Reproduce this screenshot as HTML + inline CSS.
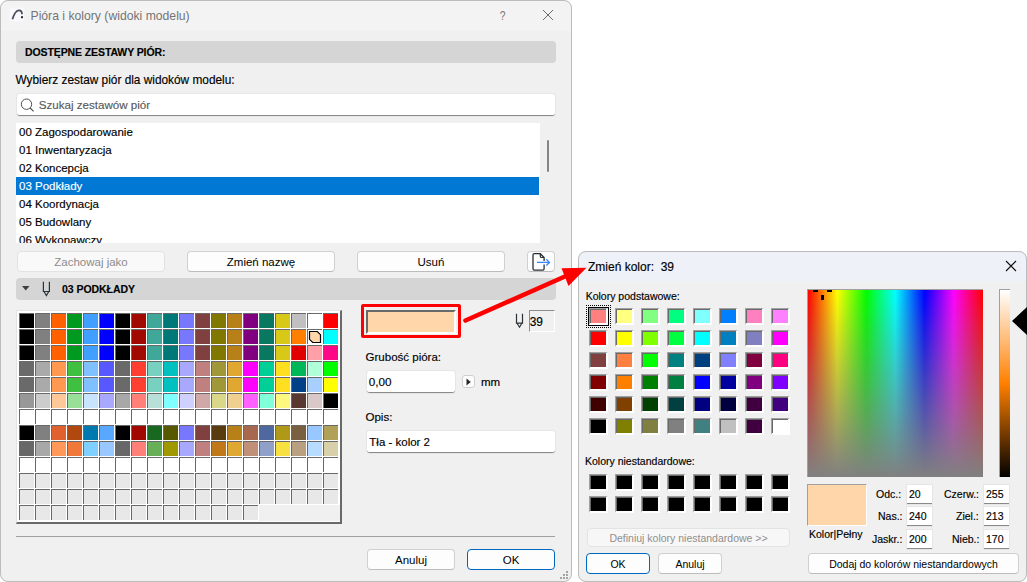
<!DOCTYPE html>
<html><head><meta charset="utf-8">
<style>
*{margin:0;padding:0;box-sizing:border-box}
html,body{width:1027px;height:582px;overflow:hidden;background:#fff;font-family:"Liberation Sans",sans-serif;color:#000}
.a{position:absolute}
.t{position:absolute;white-space:pre;line-height:1;-webkit-text-stroke:0.15px currentColor}
#lw{position:absolute;left:0;top:0;width:572px;height:582px;border-radius:8px;background:#f0f0f0;overflow:hidden}
.wb{position:absolute;border:1px solid #bcbcbc;border-radius:8px;pointer-events:none}
#lw .tb{position:absolute;left:0;top:0;width:572px;height:31px;background:#f3f3f3}
.hdr{position:absolute;background:#d5d5d5;border-radius:4px}
.btn{position:absolute;background:#fdfdfd;border:1px solid #d0d0d0;border-bottom-color:#bcbcbc;border-radius:4px;font-size:11.5px;text-align:center;line-height:1}
.btn span{position:relative;top:5px}
.inp{position:absolute;background:#fff;border-radius:3px;border-bottom:1px solid #8a8a8a;box-shadow:0 0 0 1px #e6e6e6}
#grid{position:absolute;left:16px;top:310px;width:326px;height:214px;background:#fff;border-top:1px solid #e3e3e3;border-left:1px solid #e3e3e3;border-right:2px solid #696969;border-bottom:2px solid #696969}
.pc{position:absolute;width:15px;height:15px;border-top:1px solid #696969;border-left:1px solid #696969}
#rw{position:absolute;left:578px;top:251px;width:449px;height:331px;border-radius:8px;background:#f0f0f0;overflow:hidden}
#rw .tb{position:absolute;left:0;top:0;width:449px;height:31px;background:#eef1f8}
.sw{position:absolute;width:19px;height:17px;border-top:1px solid #a0a0a0;border-left:1px solid #a0a0a0;border-right:2px solid #fff;border-bottom:2px solid #fff;box-shadow:inset 1px 1px 0 #696969}
.rb{position:absolute;background:#fdfdfd;border:1px solid #d0d0d0;border-bottom-color:#bcbcbc;border-radius:4px;font-size:10.5px;text-align:center}
.rb span{position:relative;top:3px}
.ri{position:absolute;background:#fff;border-bottom:1px solid #8a8a8a;box-shadow:0 0 0 1px #e6e6e6;font-size:10.5px}
</style></head><body>

<div id="lw">
  <div class="tb"></div>
  <!-- title icon -->
  <svg class="a" style="left:9px;top:7px" width="16" height="16" viewBox="0 0 16 16">
    <rect x="1" y="0.5" width="14" height="14" rx="3" fill="#f8f9fc"/>
    <path d="M3.4 12.3 C5 7 7.5 3.3 10 3.3 C12 3.3 13 4.8 13 7.3" fill="none" stroke="#4e4e58" stroke-width="1.8"/>
    <rect x="12" y="9.2" width="2" height="2" fill="#2a2a2a"/>
  </svg>
  <div class="t" style="left:30.5px;top:10px;font-size:12.2px;color:#737373;-webkit-text-stroke:0">Pióra i kolory (widoki modelu)</div>
  <div class="t" style="left:499px;top:8.5px;font-size:13px;color:#767676;transform:scaleX(0.8);-webkit-text-stroke:0">?</div>
  <svg class="a" style="left:542px;top:9px" width="12" height="12"><path d="M1 1L11 11M11 1L1 11" stroke="#6a6a6a" stroke-width="1"/></svg>

  <div class="hdr" style="left:16px;top:41px;width:540px;height:22px"></div>
  <div class="t" style="left:25px;top:47px;font-size:10.5px;font-weight:bold;letter-spacing:-0.1px">DOSTĘPNE ZESTAWY PIÓR:</div>

  <div class="t" style="left:15.5px;top:75px;font-size:11.85px">Wybierz zestaw piór dla widoków modelu:</div>

  <div class="inp" style="left:17px;top:94px;width:538px;height:22px"></div>
  <svg class="a" style="left:19px;top:97px" width="18" height="18"><circle cx="7.5" cy="7.2" r="5.2" fill="none" stroke="#505050" stroke-width="1"/><path d="M11.2 11L14.6 14.4" stroke="#505050" stroke-width="1.1"/></svg>
  <div class="t" style="left:38.7px;top:98.7px;font-size:11.6px;color:#5a5a5a">Szukaj zestawów piór</div>

  <div class="a" style="left:16px;top:123px;width:524px;height:120px;background:#fff;overflow:hidden">
    <div class="t" style="left:3px;top:4px;font-size:11.5px">00 Zagospodarowanie</div>
    <div class="t" style="left:3px;top:22px;font-size:11.5px">01 Inwentaryzacja</div>
    <div class="t" style="left:3px;top:40px;font-size:11.5px">02 Koncepcja</div>
    <div class="a" style="left:0;top:54px;width:523px;height:18px;background:#0078d4"></div>
    <div class="t" style="left:3px;top:58px;font-size:11.5px;color:#fff">03 Podkłady</div>
    <div class="t" style="left:3px;top:76px;font-size:11.5px">04 Koordynacja</div>
    <div class="t" style="left:3px;top:94px;font-size:11.5px">05 Budowlany</div>
    <div class="t" style="left:3px;top:112px;font-size:11.5px">06 Wykonawczy</div>
  </div>
  <div class="a" style="left:547px;top:140px;width:2px;height:32px;background:#858585;border-radius:1px"></div>

  <div class="btn" style="left:17px;top:251px;width:148px;height:21px;color:#8c8c8c;background:#f9f9f9;border-color:#e2e2e2"><span>Zachowaj jako</span></div>
  <div class="btn" style="left:187px;top:251px;width:148px;height:21px"><span>Zmień nazwę</span></div>
  <div class="btn" style="left:357px;top:251px;width:148px;height:21px"><span>Usuń</span></div>
  <div class="btn" style="left:527px;top:251px;width:28px;height:21px"></div>
  <svg class="a" style="left:530px;top:251px" width="24" height="21" viewBox="0 0 24 21">
    <path d="M14.1 13.6 V17.8 Q14.1 19.1 12.8 19.1 H4.3 Q3 19.1 3 17.8 V4 Q3 2.7 4.3 2.7 H10.3 L14.1 6.5 V10" fill="none" stroke="#2a2f35" stroke-width="1.3"/>
    <path d="M10.3 2.7 V5.2 Q10.3 6.5 11.6 6.5 H14.1" fill="none" stroke="#2a2f35" stroke-width="1.2"/>
    <path d="M7 11.4 H19.5 M16.3 8.3 L19.5 11.4 L16.3 14.5" fill="none" stroke="#3a86ff" stroke-width="1.3"/>
  </svg>

  <div class="hdr" style="left:16px;top:278px;width:540px;height:22px"></div>
  <svg class="a" style="left:21px;top:285px" width="10" height="7"><path d="M1 1H8.5L4.75 5.5Z" fill="#404040"/></svg>
  <svg class="a" style="left:40px;top:280px" width="12" height="18"><path d="M3.4 1.8V11.5H9.4V1.8M4 11.5L6.4 15.6L8.8 11.5" fill="none" stroke="#2b3238" stroke-width="1.2"/></svg>
  <div class="t" style="left:62px;top:284px;font-size:10.5px;font-weight:bold;letter-spacing:-0.05px">03 PODKŁADY</div>

  <div id="grid">
<div class="pc" style="left:2px;top:2px;background:#000000"></div>
<div class="pc" style="left:18px;top:2px;background:#808080"></div>
<div class="pc" style="left:34px;top:2px;background:#FF6000"></div>
<div class="pc" style="left:50px;top:2px;background:#009A20"></div>
<div class="pc" style="left:66px;top:2px;background:#40A0FF"></div>
<div class="pc" style="left:82px;top:2px;background:#0000FF"></div>
<div class="pc" style="left:98px;top:2px;background:#000000"></div>
<div class="pc" style="left:114px;top:2px;background:#A00A00"></div>
<div class="pc" style="left:130px;top:2px;background:#40A898"></div>
<div class="pc" style="left:146px;top:2px;background:#007878"></div>
<div class="pc" style="left:162px;top:2px;background:#7878FF"></div>
<div class="pc" style="left:178px;top:2px;background:#804040"></div>
<div class="pc" style="left:194px;top:2px;background:#807800"></div>
<div class="pc" style="left:210px;top:2px;background:#B88018"></div>
<div class="pc" style="left:226px;top:2px;background:#800080"></div>
<div class="pc" style="left:242px;top:2px;background:#087860"></div>
<div class="pc" style="left:258px;top:2px;background:#D8C818"></div>
<div class="pc" style="left:274px;top:2px;background:#C0C0C0"></div>
<div class="pc" style="left:290px;top:2px;background:#FFFFFF"></div>
<div class="pc" style="left:306px;top:2px;background:#FF0000"></div>
<div class="pc" style="left:2px;top:18px;background:#000000"></div>
<div class="pc" style="left:18px;top:18px;background:#808080"></div>
<div class="pc" style="left:34px;top:18px;background:#FF6000"></div>
<div class="pc" style="left:50px;top:18px;background:#009A20"></div>
<div class="pc" style="left:66px;top:18px;background:#40A0FF"></div>
<div class="pc" style="left:82px;top:18px;background:#0000FF"></div>
<div class="pc" style="left:98px;top:18px;background:#000000"></div>
<div class="pc" style="left:114px;top:18px;background:#A00A00"></div>
<div class="pc" style="left:130px;top:18px;background:#40A898"></div>
<div class="pc" style="left:146px;top:18px;background:#007878"></div>
<div class="pc" style="left:162px;top:18px;background:#7878FF"></div>
<div class="pc" style="left:178px;top:18px;background:#804040"></div>
<div class="pc" style="left:194px;top:18px;background:#807800"></div>
<div class="pc" style="left:210px;top:18px;background:#B88018"></div>
<div class="pc" style="left:226px;top:18px;background:#800080"></div>
<div class="pc" style="left:242px;top:18px;background:#087860"></div>
<div class="pc" style="left:258px;top:18px;background:#D8C818"></div>
<div class="pc" style="left:274px;top:18px;background:#FF8000"></div>
<div class="pc" style="left:290px;top:18px;background:#fff"></div>
<svg style="position:absolute;left:290px;top:18px" width="15" height="15"><polygon points="2.5,2.5 10.3,2.5 13.5,5.7 13.5,13.5 5.7,13.5 2.5,10.3" fill="#FFD5AA" stroke="#000" stroke-width="1.2"/></svg>
<div class="pc" style="left:306px;top:18px;background:#00FFFF"></div>
<div class="pc" style="left:2px;top:34px;background:#000000"></div>
<div class="pc" style="left:18px;top:34px;background:#808080"></div>
<div class="pc" style="left:34px;top:34px;background:#FF6000"></div>
<div class="pc" style="left:50px;top:34px;background:#009A20"></div>
<div class="pc" style="left:66px;top:34px;background:#40A0FF"></div>
<div class="pc" style="left:82px;top:34px;background:#0000FF"></div>
<div class="pc" style="left:98px;top:34px;background:#000000"></div>
<div class="pc" style="left:114px;top:34px;background:#A00A00"></div>
<div class="pc" style="left:130px;top:34px;background:#40A898"></div>
<div class="pc" style="left:146px;top:34px;background:#007878"></div>
<div class="pc" style="left:162px;top:34px;background:#7878FF"></div>
<div class="pc" style="left:178px;top:34px;background:#804040"></div>
<div class="pc" style="left:194px;top:34px;background:#807800"></div>
<div class="pc" style="left:210px;top:34px;background:#B88018"></div>
<div class="pc" style="left:226px;top:34px;background:#800080"></div>
<div class="pc" style="left:242px;top:34px;background:#087860"></div>
<div class="pc" style="left:258px;top:34px;background:#D8C818"></div>
<div class="pc" style="left:274px;top:34px;background:#E00000"></div>
<div class="pc" style="left:290px;top:34px;background:#FFA0A8"></div>
<div class="pc" style="left:306px;top:34px;background:#FF0888"></div>
<div class="pc" style="left:2px;top:50px;background:#6A6A6A"></div>
<div class="pc" style="left:18px;top:50px;background:#AAAAAA"></div>
<div class="pc" style="left:34px;top:50px;background:#FF9850"></div>
<div class="pc" style="left:50px;top:50px;background:#40C040"></div>
<div class="pc" style="left:66px;top:50px;background:#80C0FF"></div>
<div class="pc" style="left:82px;top:50px;background:#5858FF"></div>
<div class="pc" style="left:98px;top:50px;background:#6A6A6A"></div>
<div class="pc" style="left:114px;top:50px;background:#FF4030"></div>
<div class="pc" style="left:130px;top:50px;background:#78D0C0"></div>
<div class="pc" style="left:146px;top:50px;background:#00C0C0"></div>
<div class="pc" style="left:162px;top:50px;background:#A8A8FF"></div>
<div class="pc" style="left:178px;top:50px;background:#C08080"></div>
<div class="pc" style="left:194px;top:50px;background:#A09838"></div>
<div class="pc" style="left:210px;top:50px;background:#E0A830"></div>
<div class="pc" style="left:226px;top:50px;background:#FF00FF"></div>
<div class="pc" style="left:242px;top:50px;background:#00D098"></div>
<div class="pc" style="left:258px;top:50px;background:#FFE020"></div>
<div class="pc" style="left:274px;top:50px;background:#00B858"></div>
<div class="pc" style="left:290px;top:50px;background:#B0FFD8"></div>
<div class="pc" style="left:306px;top:50px;background:#00FF00"></div>
<div class="pc" style="left:2px;top:66px;background:#6A6A6A"></div>
<div class="pc" style="left:18px;top:66px;background:#AAAAAA"></div>
<div class="pc" style="left:34px;top:66px;background:#FF9850"></div>
<div class="pc" style="left:50px;top:66px;background:#40C040"></div>
<div class="pc" style="left:66px;top:66px;background:#80C0FF"></div>
<div class="pc" style="left:82px;top:66px;background:#5858FF"></div>
<div class="pc" style="left:98px;top:66px;background:#6A6A6A"></div>
<div class="pc" style="left:114px;top:66px;background:#FF4030"></div>
<div class="pc" style="left:130px;top:66px;background:#78D0C0"></div>
<div class="pc" style="left:146px;top:66px;background:#00C0C0"></div>
<div class="pc" style="left:162px;top:66px;background:#A8A8FF"></div>
<div class="pc" style="left:178px;top:66px;background:#C08080"></div>
<div class="pc" style="left:194px;top:66px;background:#A09838"></div>
<div class="pc" style="left:210px;top:66px;background:#E0A830"></div>
<div class="pc" style="left:226px;top:66px;background:#FF00FF"></div>
<div class="pc" style="left:242px;top:66px;background:#00D098"></div>
<div class="pc" style="left:258px;top:66px;background:#FFE020"></div>
<div class="pc" style="left:274px;top:66px;background:#004088"></div>
<div class="pc" style="left:290px;top:66px;background:#A8D0FF"></div>
<div class="pc" style="left:306px;top:66px;background:#FFFF00"></div>
<div class="pc" style="left:2px;top:82px;background:#989898"></div>
<div class="pc" style="left:18px;top:82px;background:#CCCCCC"></div>
<div class="pc" style="left:34px;top:82px;background:#FFC898"></div>
<div class="pc" style="left:50px;top:82px;background:#98E098"></div>
<div class="pc" style="left:66px;top:82px;background:#C8E4FF"></div>
<div class="pc" style="left:82px;top:82px;background:#A8A8FF"></div>
<div class="pc" style="left:98px;top:82px;background:#A8A8A8"></div>
<div class="pc" style="left:114px;top:82px;background:#FF8078"></div>
<div class="pc" style="left:130px;top:82px;background:#B8E0D8"></div>
<div class="pc" style="left:146px;top:82px;background:#80FFFF"></div>
<div class="pc" style="left:162px;top:82px;background:#D0D0FF"></div>
<div class="pc" style="left:178px;top:82px;background:#D0A8A8"></div>
<div class="pc" style="left:194px;top:82px;background:#D8D888"></div>
<div class="pc" style="left:210px;top:82px;background:#F0D090"></div>
<div class="pc" style="left:226px;top:82px;background:#FF60FF"></div>
<div class="pc" style="left:242px;top:82px;background:#80FFD8"></div>
<div class="pc" style="left:258px;top:82px;background:#FFF880"></div>
<div class="pc" style="left:274px;top:82px;background:#583830"></div>
<div class="pc" style="left:290px;top:82px;background:#D8C8C8"></div>
<div class="pc" style="left:306px;top:82px;background:#000000"></div>
<div class="pc" style="left:2px;top:98px;background:#FFFFFF"></div>
<div class="pc" style="left:18px;top:98px;background:#FFFFFF"></div>
<div class="pc" style="left:34px;top:98px;background:#FFFFFF"></div>
<div class="pc" style="left:50px;top:98px;background:#FFFFFF"></div>
<div class="pc" style="left:66px;top:98px;background:#FFFFFF"></div>
<div class="pc" style="left:82px;top:98px;background:#FFFFFF"></div>
<div class="pc" style="left:98px;top:98px;background:#FFFFFF"></div>
<div class="pc" style="left:114px;top:98px;background:#FFFFFF"></div>
<div class="pc" style="left:130px;top:98px;background:#FFFFFF"></div>
<div class="pc" style="left:146px;top:98px;background:#FFFFFF"></div>
<div class="pc" style="left:162px;top:98px;background:#FFFFFF"></div>
<div class="pc" style="left:178px;top:98px;background:#FFFFFF"></div>
<div class="pc" style="left:194px;top:98px;background:#FFFFFF"></div>
<div class="pc" style="left:210px;top:98px;background:#FFFFFF"></div>
<div class="pc" style="left:226px;top:98px;background:#FFFFFF"></div>
<div class="pc" style="left:242px;top:98px;background:#FFFFFF"></div>
<div class="pc" style="left:258px;top:98px;background:#FFFFFF"></div>
<div class="pc" style="left:274px;top:98px;background:#FFFFFF"></div>
<div class="pc" style="left:290px;top:98px;background:#FFFFFF"></div>
<div class="pc" style="left:306px;top:98px;background:#FFFFFF"></div>
<div class="pc" style="left:2px;top:114px;background:#000000"></div>
<div class="pc" style="left:18px;top:114px;background:#808080"></div>
<div class="pc" style="left:34px;top:114px;background:#E06030"></div>
<div class="pc" style="left:50px;top:114px;background:#B04810"></div>
<div class="pc" style="left:66px;top:114px;background:#0078B0"></div>
<div class="pc" style="left:82px;top:114px;background:#58A8FF"></div>
<div class="pc" style="left:98px;top:114px;background:#000000"></div>
<div class="pc" style="left:114px;top:114px;background:#A00800"></div>
<div class="pc" style="left:130px;top:114px;background:#186820"></div>
<div class="pc" style="left:146px;top:114px;background:#585800"></div>
<div class="pc" style="left:162px;top:114px;background:#7878FF"></div>
<div class="pc" style="left:178px;top:114px;background:#804040"></div>
<div class="pc" style="left:194px;top:114px;background:#583C10"></div>
<div class="pc" style="left:210px;top:114px;background:#B88018"></div>
<div class="pc" style="left:226px;top:114px;background:#A86850"></div>
<div class="pc" style="left:242px;top:114px;background:#5068A0"></div>
<div class="pc" style="left:258px;top:114px;background:#B09818"></div>
<div class="pc" style="left:274px;top:114px;background:#786040"></div>
<div class="pc" style="left:290px;top:114px;background:#98C8FF"></div>
<div class="pc" style="left:306px;top:114px;background:#B0A058"></div>
<div class="pc" style="left:2px;top:130px;background:#686868"></div>
<div class="pc" style="left:18px;top:130px;background:#A8A8A8"></div>
<div class="pc" style="left:34px;top:130px;background:#FF9858"></div>
<div class="pc" style="left:50px;top:130px;background:#F07838"></div>
<div class="pc" style="left:66px;top:130px;background:#80D0FF"></div>
<div class="pc" style="left:82px;top:130px;background:#98C8FF"></div>
<div class="pc" style="left:98px;top:130px;background:#686868"></div>
<div class="pc" style="left:114px;top:130px;background:#FF8078"></div>
<div class="pc" style="left:130px;top:130px;background:#68B058"></div>
<div class="pc" style="left:146px;top:130px;background:#A09800"></div>
<div class="pc" style="left:162px;top:130px;background:#A8A8FF"></div>
<div class="pc" style="left:178px;top:130px;background:#C08080"></div>
<div class="pc" style="left:194px;top:130px;background:#C07818"></div>
<div class="pc" style="left:210px;top:130px;background:#E0A830"></div>
<div class="pc" style="left:226px;top:130px;background:#C09078"></div>
<div class="pc" style="left:242px;top:130px;background:#90A0C8"></div>
<div class="pc" style="left:258px;top:130px;background:#F8E040"></div>
<div class="pc" style="left:274px;top:130px;background:#B8A080"></div>
<div class="pc" style="left:290px;top:130px;background:#B8DCFF"></div>
<div class="pc" style="left:306px;top:130px;background:#D8D0A8"></div>
<div class="pc" style="left:2px;top:146px;background:#FFFFFF"></div>
<div class="pc" style="left:18px;top:146px;background:#FFFFFF"></div>
<div class="pc" style="left:34px;top:146px;background:#FFFFFF"></div>
<div class="pc" style="left:50px;top:146px;background:#FFFFFF"></div>
<div class="pc" style="left:66px;top:146px;background:#FFFFFF"></div>
<div class="pc" style="left:82px;top:146px;background:#FFFFFF"></div>
<div class="pc" style="left:98px;top:146px;background:#FFFFFF"></div>
<div class="pc" style="left:114px;top:146px;background:#FFFFFF"></div>
<div class="pc" style="left:130px;top:146px;background:#FFFFFF"></div>
<div class="pc" style="left:146px;top:146px;background:#FFFFFF"></div>
<div class="pc" style="left:162px;top:146px;background:#FFFFFF"></div>
<div class="pc" style="left:178px;top:146px;background:#FFFFFF"></div>
<div class="pc" style="left:194px;top:146px;background:#FFFFFF"></div>
<div class="pc" style="left:210px;top:146px;background:#FFFFFF"></div>
<div class="pc" style="left:226px;top:146px;background:#FFFFFF"></div>
<div class="pc" style="left:242px;top:146px;background:#FFFFFF"></div>
<div class="pc" style="left:258px;top:146px;background:#FFFFFF"></div>
<div class="pc" style="left:274px;top:146px;background:#FFFFFF"></div>
<div class="pc" style="left:290px;top:146px;background:#FFFFFF"></div>
<div class="pc" style="left:306px;top:146px;background:#FFFFFF"></div>
<div class="pc" style="left:2px;top:162px;background:#E8E8E8"></div>
<div class="pc" style="left:18px;top:162px;background:#E8E8E8"></div>
<div class="pc" style="left:34px;top:162px;background:#E8E8E8"></div>
<div class="pc" style="left:50px;top:162px;background:#E8E8E8"></div>
<div class="pc" style="left:66px;top:162px;background:#E8E8E8"></div>
<div class="pc" style="left:82px;top:162px;background:#E8E8E8"></div>
<div class="pc" style="left:98px;top:162px;background:#E8E8E8"></div>
<div class="pc" style="left:114px;top:162px;background:#E8E8E8"></div>
<div class="pc" style="left:130px;top:162px;background:#E8E8E8"></div>
<div class="pc" style="left:146px;top:162px;background:#E8E8E8"></div>
<div class="pc" style="left:162px;top:162px;background:#E8E8E8"></div>
<div class="pc" style="left:178px;top:162px;background:#E8E8E8"></div>
<div class="pc" style="left:194px;top:162px;background:#E8E8E8"></div>
<div class="pc" style="left:210px;top:162px;background:#E8E8E8"></div>
<div class="pc" style="left:226px;top:162px;background:#E8E8E8"></div>
<div class="pc" style="left:242px;top:162px;background:#E8E8E8"></div>
<div class="pc" style="left:258px;top:162px;background:#E8E8E8"></div>
<div class="pc" style="left:274px;top:162px;background:#E8E8E8"></div>
<div class="pc" style="left:290px;top:162px;background:#E8E8E8"></div>
<div class="pc" style="left:306px;top:162px;background:#E8E8E8"></div>
<div class="pc" style="left:2px;top:178px;background:#E8E8E8"></div>
<div class="pc" style="left:18px;top:178px;background:#E8E8E8"></div>
<div class="pc" style="left:34px;top:178px;background:#E8E8E8"></div>
<div class="pc" style="left:50px;top:178px;background:#E8E8E8"></div>
<div class="pc" style="left:66px;top:178px;background:#E8E8E8"></div>
<div class="pc" style="left:82px;top:178px;background:#E8E8E8"></div>
<div class="pc" style="left:98px;top:178px;background:#E8E8E8"></div>
<div class="pc" style="left:114px;top:178px;background:#E8E8E8"></div>
<div class="pc" style="left:130px;top:178px;background:#E8E8E8"></div>
<div class="pc" style="left:146px;top:178px;background:#E8E8E8"></div>
<div class="pc" style="left:162px;top:178px;background:#E8E8E8"></div>
<div class="pc" style="left:178px;top:178px;background:#E8E8E8"></div>
<div class="pc" style="left:194px;top:178px;background:#E8E8E8"></div>
<div class="pc" style="left:210px;top:178px;background:#E8E8E8"></div>
<div class="pc" style="left:226px;top:178px;background:#E8E8E8"></div>
<div class="pc" style="left:242px;top:178px;background:#E8E8E8"></div>
<div class="pc" style="left:258px;top:178px;background:#E8E8E8"></div>
<div class="pc" style="left:274px;top:178px;background:#E8E8E8"></div>
<div class="pc" style="left:290px;top:178px;background:#E8E8E8"></div>
<div class="pc" style="left:306px;top:178px;background:#E8E8E8"></div>
<div class="pc" style="left:2px;top:194px;background:#E8E8E8"></div>
<div class="pc" style="left:18px;top:194px;background:#E8E8E8"></div>
<div class="pc" style="left:34px;top:194px;background:#E8E8E8"></div>
<div class="pc" style="left:50px;top:194px;background:#E8E8E8"></div>
<div class="pc" style="left:66px;top:194px;background:#E8E8E8"></div>
<div class="pc" style="left:82px;top:194px;background:#E8E8E8"></div>
<div class="pc" style="left:98px;top:194px;background:#E8E8E8"></div>
<div class="pc" style="left:114px;top:194px;background:#E8E8E8"></div>
<div class="pc" style="left:130px;top:194px;background:#E8E8E8"></div>
<div class="pc" style="left:146px;top:194px;background:#E8E8E8"></div>
<div class="pc" style="left:162px;top:194px;background:#E8E8E8"></div>
<div class="pc" style="left:178px;top:194px;background:#E8E8E8"></div>
<div class="pc" style="left:194px;top:194px;background:#E8E8E8"></div>
<div class="pc" style="left:210px;top:194px;background:#E8E8E8"></div>
<div class="pc" style="left:226px;top:194px;background:#E8E8E8"></div>
<div class="a" style="left:242px;top:194px;width:81px;height:16px;background:#f0f0f0"></div>
  </div>

  <!-- color swatch with red box -->
  <div class="a" style="left:366px;top:310px;width:90px;height:24px;border-top:2px solid #696969;border-left:2px solid #696969;border-right:2px solid #fff;border-bottom:2px solid #fff;background:#FFD5AA"></div>

  <svg class="a" style="left:514px;top:312px" width="12" height="18"><path d="M2.5 1.8V11.2H8.5V1.8M3.1 11.2L5.5 15.2L7.9 11.2" fill="none" stroke="#2b3238" stroke-width="1.2"/></svg>
  <div class="a" style="left:529px;top:310px;width:26px;height:22px;border-top:1px solid #8c8c8c;border-left:1px solid #8c8c8c;border-right:1px solid #fff;border-bottom:1px solid #fff"></div>
  <div class="t" style="left:529.7px;top:317px;font-size:11.9px">39</div>

  <div class="t" style="left:365.6px;top:352px;font-size:11.5px">Grubość pióra:</div>
  <div class="inp" style="left:367px;top:371px;width:88px;height:22px"></div>
  <div class="t" style="left:368.8px;top:376px;font-size:11.7px">0,00</div>
  <div class="a" style="left:462px;top:375px;width:13px;height:13px;background:#fdfdfd;border:1px solid #cfcfcf;border-radius:3px"></div>
  <svg class="a" style="left:466px;top:378px" width="6" height="8"><path d="M0.5 0.5L4.8 4L0.5 7.5Z" fill="#2a2a2a"/></svg>
  <div class="t" style="left:481px;top:376.5px;font-size:11.5px">mm</div>

  <div class="t" style="left:365.5px;top:412px;font-size:11.5px">Opis:</div>
  <div class="inp" style="left:367px;top:431px;width:188px;height:22px"></div>
  <div class="t" style="left:369.3px;top:437px;font-size:11.5px">Tła - kolor 2</div>

  <div class="a" style="left:16px;top:536px;width:539px;height:1px;background:#a0a0a0"></div>
  <div class="btn" style="left:367px;top:549px;width:88px;height:21px"><span>Anuluj</span></div>
  <svg class="a" style="left:558px;top:569px" width="12" height="12" fill="#a4a4a4"><rect x="8" y="2" width="2" height="2"/><rect x="5" y="5" width="2" height="2"/><rect x="8" y="5" width="2" height="2"/><rect x="2" y="8" width="2" height="2"/><rect x="5" y="8" width="2" height="2"/><rect x="8" y="8" width="2" height="2"/></svg>
  <div class="btn" style="left:467px;top:549px;width:88px;height:21px;border:1px solid #0067c0"><span>OK</span></div>
</div>

<div class="wb" style="left:0;top:0;width:572px;height:582px"></div>
<!-- red annotation box + arrow -->
<div class="a" style="left:361px;top:304px;width:100px;height:34px;border:3px solid #ff0000;border-radius:2px"></div>


<div id="rw">
  <div class="tb"></div>
  <div class="t" style="left:10px;top:10px;font-size:12px">Zmień kolor:  39</div>
  <svg class="a" style="left:427px;top:9px" width="13" height="13"><path d="M1 1L11 11M11 1L1 11" stroke="#111" stroke-width="1.1"/></svg>
  <div class="t" style="left:7.7px;top:40px;font-size:10.5px">Kolory podstawowe:</div>
  <div class="t" style="left:7px;top:205px;font-size:10.5px">Kolory niestandardowe:</div>
</div>
<div class="wb" style="left:578px;top:251px;width:449px;height:331px"></div>
<div id="rwc" class="a" style="left:0;top:0">
<div class="sw" style="left:589px;top:308px;background:#FF8080"></div>
<div class="sw" style="left:615px;top:308px;background:#FFFF80"></div>
<div class="sw" style="left:641px;top:308px;background:#80FF80"></div>
<div class="sw" style="left:667px;top:308px;background:#00FF80"></div>
<div class="sw" style="left:693px;top:308px;background:#80FFFF"></div>
<div class="sw" style="left:719px;top:308px;background:#0080FF"></div>
<div class="sw" style="left:745px;top:308px;background:#FF80C0"></div>
<div class="sw" style="left:771px;top:308px;background:#FF80FF"></div>
<div class="sw" style="left:589px;top:330px;background:#FF0000"></div>
<div class="sw" style="left:615px;top:330px;background:#FFFF00"></div>
<div class="sw" style="left:641px;top:330px;background:#80FF00"></div>
<div class="sw" style="left:667px;top:330px;background:#00FF40"></div>
<div class="sw" style="left:693px;top:330px;background:#00FFFF"></div>
<div class="sw" style="left:719px;top:330px;background:#0080C0"></div>
<div class="sw" style="left:745px;top:330px;background:#8080C0"></div>
<div class="sw" style="left:771px;top:330px;background:#FF00FF"></div>
<div class="sw" style="left:589px;top:352px;background:#804040"></div>
<div class="sw" style="left:615px;top:352px;background:#FF8040"></div>
<div class="sw" style="left:641px;top:352px;background:#00FF00"></div>
<div class="sw" style="left:667px;top:352px;background:#008080"></div>
<div class="sw" style="left:693px;top:352px;background:#004080"></div>
<div class="sw" style="left:719px;top:352px;background:#8080FF"></div>
<div class="sw" style="left:745px;top:352px;background:#800040"></div>
<div class="sw" style="left:771px;top:352px;background:#FF0080"></div>
<div class="sw" style="left:589px;top:374px;background:#800000"></div>
<div class="sw" style="left:615px;top:374px;background:#FF8000"></div>
<div class="sw" style="left:641px;top:374px;background:#008000"></div>
<div class="sw" style="left:667px;top:374px;background:#008040"></div>
<div class="sw" style="left:693px;top:374px;background:#0000FF"></div>
<div class="sw" style="left:719px;top:374px;background:#0000A0"></div>
<div class="sw" style="left:745px;top:374px;background:#800080"></div>
<div class="sw" style="left:771px;top:374px;background:#8000FF"></div>
<div class="sw" style="left:589px;top:396px;background:#400000"></div>
<div class="sw" style="left:615px;top:396px;background:#804000"></div>
<div class="sw" style="left:641px;top:396px;background:#004000"></div>
<div class="sw" style="left:667px;top:396px;background:#004040"></div>
<div class="sw" style="left:693px;top:396px;background:#000080"></div>
<div class="sw" style="left:719px;top:396px;background:#000040"></div>
<div class="sw" style="left:745px;top:396px;background:#400040"></div>
<div class="sw" style="left:771px;top:396px;background:#400080"></div>
<div class="sw" style="left:589px;top:418px;background:#000000"></div>
<div class="sw" style="left:615px;top:418px;background:#808000"></div>
<div class="sw" style="left:641px;top:418px;background:#808040"></div>
<div class="sw" style="left:667px;top:418px;background:#808080"></div>
<div class="sw" style="left:693px;top:418px;background:#408080"></div>
<div class="sw" style="left:719px;top:418px;background:#C0C0C0"></div>
<div class="sw" style="left:745px;top:418px;background:#400040"></div>
<div class="sw" style="left:771px;top:418px;background:#FFFFFF"></div>
<div class="sw" style="left:589px;top:474px;background:#000"></div>
<div class="sw" style="left:615px;top:474px;background:#000"></div>
<div class="sw" style="left:641px;top:474px;background:#000"></div>
<div class="sw" style="left:667px;top:474px;background:#000"></div>
<div class="sw" style="left:693px;top:474px;background:#000"></div>
<div class="sw" style="left:719px;top:474px;background:#000"></div>
<div class="sw" style="left:745px;top:474px;background:#000"></div>
<div class="sw" style="left:771px;top:474px;background:#000"></div>
<div class="sw" style="left:589px;top:496px;background:#000"></div>
<div class="sw" style="left:615px;top:496px;background:#000"></div>
<div class="sw" style="left:641px;top:496px;background:#000"></div>
<div class="sw" style="left:667px;top:496px;background:#000"></div>
<div class="sw" style="left:693px;top:496px;background:#000"></div>
<div class="sw" style="left:719px;top:496px;background:#000"></div>
<div class="sw" style="left:745px;top:496px;background:#000"></div>
<div class="sw" style="left:771px;top:496px;background:#000"></div>
  <!-- selection focus -->
  <div class="a" style="left:588px;top:307px;width:21px;height:19px;border:1px solid #000"></div>
  <div class="a" style="left:586px;top:305px;width:25px;height:23px;border:1px dotted #000"></div>

  <!-- spectrum -->
  <div class="a" style="left:807px;top:289px;width:176px;height:188px;border-top:1px solid #a0a0a0;border-left:1px solid #a0a0a0;background:linear-gradient(to bottom,rgba(128,128,128,0),rgba(128,128,128,1)),linear-gradient(to right,#f00 0%,#ff0 16.67%,#0f0 33.33%,#0ff 50%,#00f 66.67%,#f0f 83.33%,#f00 100%)"></div>
  <div class="a" style="left:813px;top:290px;width:5px;height:2px;background:#000"></div>
  <div class="a" style="left:827px;top:290px;width:5px;height:2px;background:#000"></div>
  <div class="a" style="left:821px;top:295px;width:3px;height:5px;background:#000"></div>
  <div class="a" style="left:999px;top:289px;width:11px;height:188px;border-top:1px solid #a0a0a0;border-left:1px solid #a0a0a0;background:linear-gradient(to bottom,#fff 0%,#ff8000 50%,#000 100%)"></div>
  <svg class="a" style="left:1011px;top:307px" width="16" height="29"><path d="M1 14L16 0V28Z" fill="#000"/></svg>

  <div class="a" style="left:807px;top:484px;width:60px;height:42px;background:#FFD5AA;border-top:1px solid #a0a0a0;border-left:1px solid #a0a0a0;border-right:1px solid #fff;border-bottom:1px solid #fff"></div>
  <div class="t" style="left:809px;top:529px;font-size:10.5px">Kolor|Pełny</div>

  <div class="t" style="left:876px;top:489px;font-size:10.5px">Odc.:</div>
  <div class="t" style="left:878px;top:511px;font-size:10.5px">Nas.:</div>
  <div class="t" style="left:872px;top:534px;font-size:10.5px">Jaskr.:</div>
  <div class="ri" style="left:907px;top:485px;width:25px;height:19px"><span class="t" style="left:2px;top:4px">20</span></div>
  <div class="ri" style="left:907px;top:507px;width:25px;height:19px"><span class="t" style="left:2px;top:4px">240</span></div>
  <div class="ri" style="left:907px;top:530px;width:25px;height:19px"><span class="t" style="left:2px;top:4px">200</span></div>
  <div class="t" style="left:944px;top:489px;font-size:10.5px">Czerw.:</div>
  <div class="t" style="left:956px;top:511px;font-size:10.5px">Ziel.:</div>
  <div class="t" style="left:952px;top:534px;font-size:10.5px">Nieb.:</div>
  <div class="ri" style="left:984px;top:485px;width:25px;height:19px"><span class="t" style="left:2px;top:4px">255</span></div>
  <div class="ri" style="left:984px;top:507px;width:25px;height:19px"><span class="t" style="left:2px;top:4px">213</span></div>
  <div class="ri" style="left:984px;top:530px;width:25px;height:19px"><span class="t" style="left:2px;top:4px">170</span></div>

  <div class="rb" style="left:587px;top:528px;width:203px;height:19px;color:#8f8f8f;background:#f7f7f7;border-color:#e3e3e3"><span>Definiuj kolory niestandardowe &gt;&gt;</span></div>
  <div class="rb" style="left:586px;top:553px;width:64px;height:21px;border:1px solid #0067c0"><span style="position:relative;top:4px">OK</span></div>
  <div class="rb" style="left:658px;top:553px;width:64px;height:21px"><span style="position:relative;top:4px">Anuluj</span></div>
  <div class="rb" style="left:808px;top:553px;width:211px;height:21px"><span style="position:relative;top:4px">Dodaj do kolorów niestandardowych</span></div>
</div>
<svg class="a" style="left:0;top:0" width="1027" height="582">
  <path d="M465.5 320.5 L566 276" stroke="#ff0000" stroke-width="4.6" stroke-linecap="round"/>
  <path d="M561.5 268.3 L586.5 267.8 L568.5 286 Z" fill="#ff0000"/>
</svg>
</body></html>
